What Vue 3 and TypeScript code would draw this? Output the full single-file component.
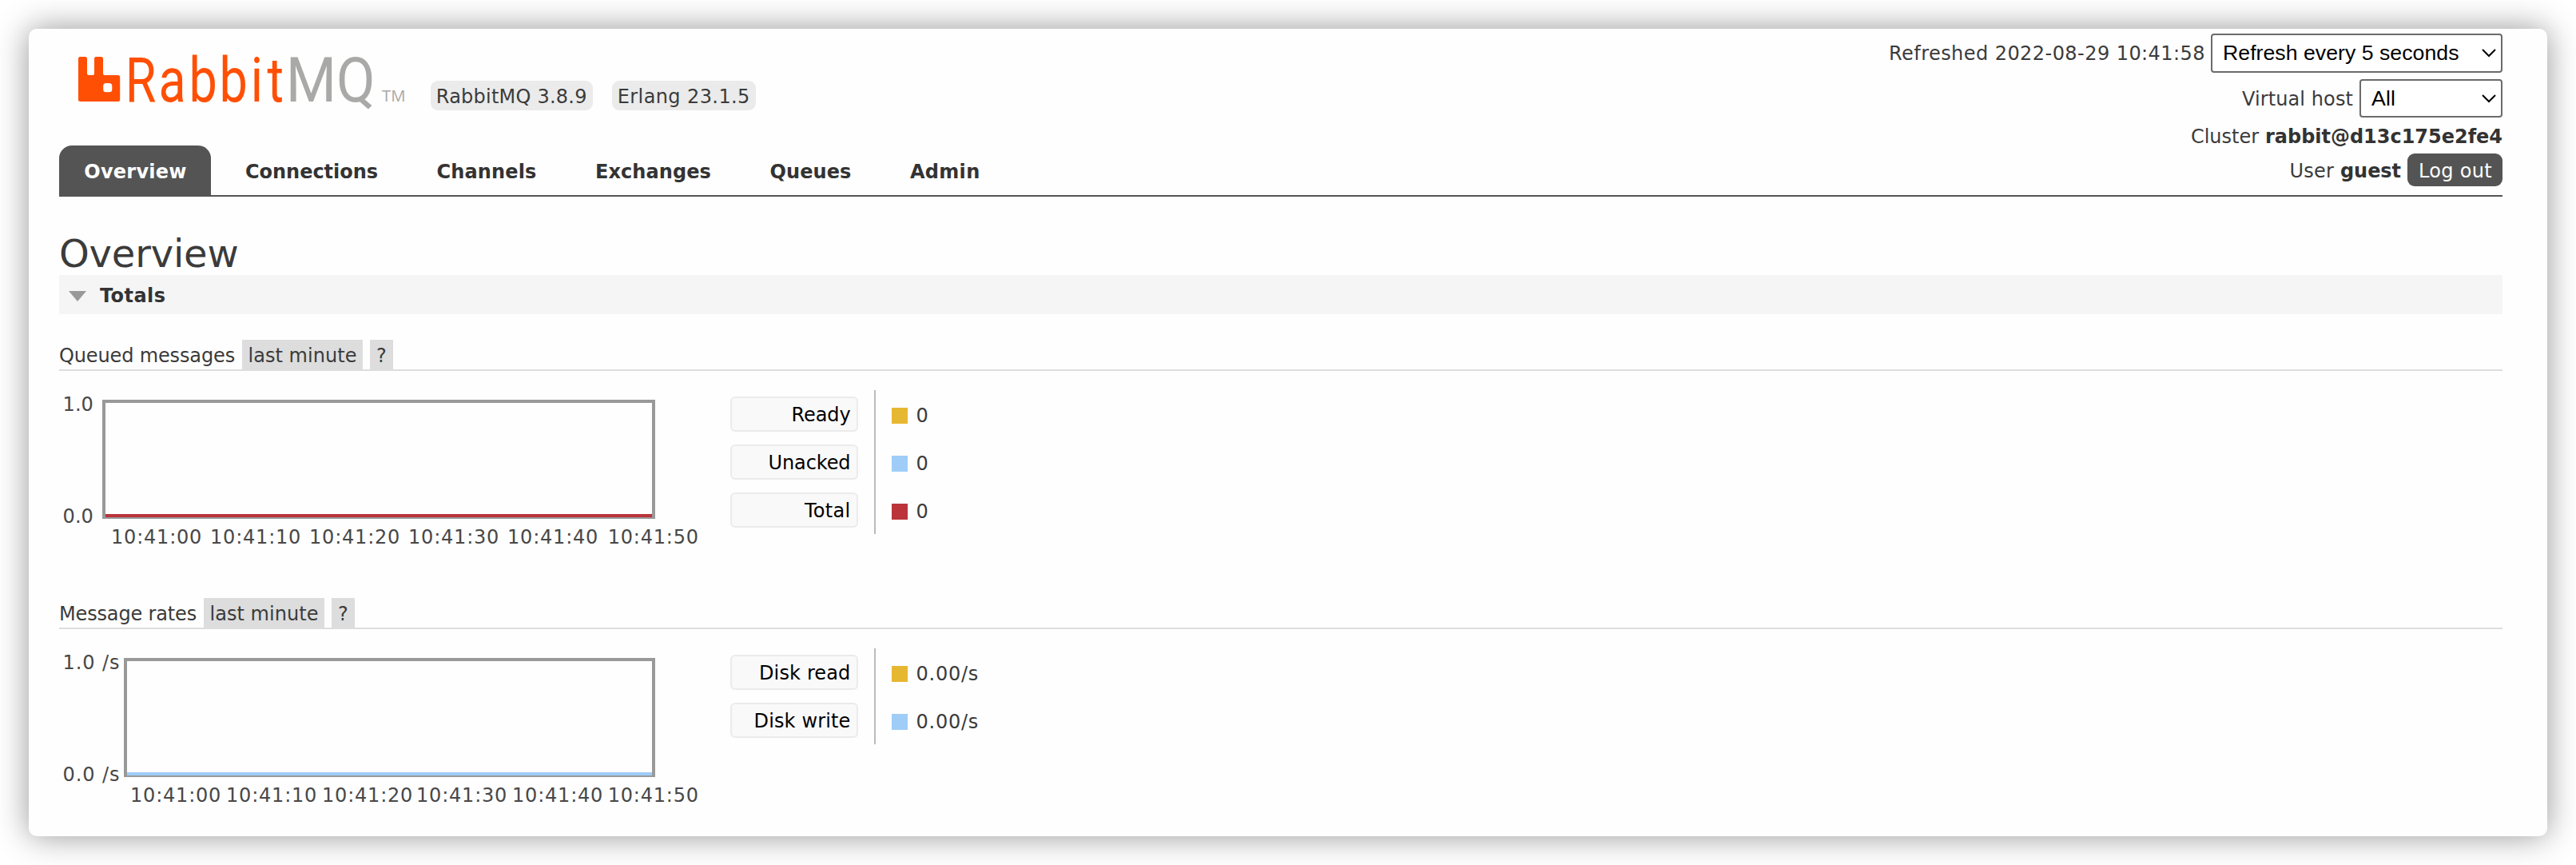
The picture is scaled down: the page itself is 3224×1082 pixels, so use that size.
<script setup lang="ts">
interface Tab { label: string; width: number }
interface Tick { label: string; x: number }
interface Series { label: string; width: number; value: string; valueWidth: number; color: string }
interface Panel {
  title: string
  titleWidth: number
  unit: string
  labelWidth: number
  frameX: number
  line: string
  ticks: Tick[]
  series: Series[]
}

// Spreads a label's letters evenly so that it takes up the given width in pixels.
const vFit = {
  mounted(el: HTMLElement, binding: { value: number }) {
    const count = (el.textContent ?? '').length
    if (!count) return
    const natural = el.getBoundingClientRect().width
    el.style.letterSpacing = `${((binding.value - natural) / count).toFixed(4)}px`
  },
}

const tabs: Tab[] = [
  { label: 'Overview', width: 128.5 },
  { label: 'Connections', width: 166 },
  { label: 'Channels', width: 125 },
  { label: 'Exchanges', width: 145 },
  { label: 'Queues', width: 102 },
  { label: 'Admin', width: 87.5 },
]

const yellow = '#e6b731'
const blue = '#9fcdf7'
const red = '#ba343a'

const makeTicks = (xs: number[]): Tick[] => xs.map((x, i) => ({ label: `10:41:${i}0`, x }))

const panels: Panel[] = [
  {
    title: 'Queued messages',
    titleWidth: 220,
    unit: '',
    labelWidth: 38.4,
    frameX: 54,
    line: red,
    ticks: makeTicks([65, 189, 313, 437, 561, 686.7]),
    series: [
      { label: 'Ready', width: 74, value: '0', valueWidth: 15.3, color: yellow },
      { label: 'Unacked', width: 103, value: '0', valueWidth: 15.3, color: blue },
      { label: 'Total', width: 57.5, value: '0', valueWidth: 15.3, color: red },
    ],
  },
  {
    title: 'Message rates',
    titleWidth: 172,
    unit: ' /s',
    labelWidth: 71,
    frameX: 81,
    line: blue,
    ticks: makeTicks([89, 209, 329, 447, 567, 686.7]),
    series: [
      { label: 'Disk read', width: 114.5, value: '0.00/s', valueWidth: 78.5, color: yellow },
      { label: 'Disk write', width: 121, value: '0.00/s', valueWidth: 78.5, color: blue },
    ],
  },
]
</script>

<template>
  <div class="window">
    <header class="header">
      <div class="left">
        <div class="brand">
          <svg class="logo" width="420" height="106" viewBox="0 -20 420 106">
            <path
              class="mark"
              fill-rule="evenodd"
              d="M2.500 5H8.500Q11 5 11 7.500V26Q11 28 13 28H18Q20 28 20 26V7.500Q20 5 22.500 5H28.500Q31 5 31 7.500V26Q31 28 33 28H50Q52.200 28 52.200 30.500V58.500Q52.200 61 50 61H2.500Q0 61 0 58.500V7.500Q0 5 2.500 5ZM35 38Q31.200 38 31.200 41.500V46Q31.200 49.300 35 49.300H38.500Q42.300 49.300 42.300 46V41.500Q42.300 38 38.500 38Z"
            />
            <text class="word orange" transform="translate(0 61) scale(0.8 1)" x="73.500 125.500 173 220.500 269.800 295.500">Rabbit</text>
            <text class="word grey" transform="translate(259.800 61) scale(0.925 1)">M</text>
            <text class="word grey" transform="translate(323 61) scale(0.9 1)">Q</text>
            <text class="tm" x="380" y="61" textLength="29.500" lengthAdjust="spacingAndGlyphs">TM</text>
          </svg>
          <span class="badge"><span v-fit="189">RabbitMQ 3.8.9</span></span>
          <span class="badge"><span v-fit="166">Erlang 23.1.5</span></span>
        </div>
        <nav class="tabs">
          <a v-for="(tab, i) in tabs" :key="tab.label" class="tab" :class="{ active: i === 0 }"><span v-fit="tab.width">{{ tab.label }}</span></a>
        </nav>
      </div>

      <div class="right">
        <div class="row refresh">
          <span v-fit="396">Refreshed 2022-08-29 10:41:58</span>
          <div class="select interval">
            <span v-fit="295.500">Refresh every 5 seconds</span>
            <svg width="18" height="12" viewBox="0 0 18 12"><path d="M1 1L9 9L17 1" /></svg>
          </div>
        </div>
        <div class="row vhost">
          <span v-fit="139">Virtual host</span>
          <div class="select host">
            <span v-fit="30">All</span>
            <svg width="18" height="12" viewBox="0 0 18 12"><path d="M1 1L9 9L17 1" /></svg>
          </div>
        </div>
        <div class="row cluster">
          <span v-fit="85">Cluster</span>
          <b v-fit="297">rabbit@d13c175e2fe4</b>
        </div>
        <div class="row user">
          <span v-fit="55.500">User</span>
          <b v-fit="76">guest</b>
          <span class="logout"><span v-fit="92">Log out</span></span>
        </div>
      </div>
    </header>

    <h1><span v-fit="224.500">Overview</span></h1>
    <h2>
      <svg width="22" height="13" viewBox="0 0 22 13"><path d="M0 0H22L11 13Z" /></svg>
      <span v-fit="82.500">Totals</span>
    </h2>

    <section v-for="panel in panels" :key="panel.title" class="panel">
      <div class="panel-head">
        <span class="title"><span v-fit="panel.titleWidth">{{ panel.title }}</span></span>
        <span class="chip range"><span v-fit="136">last minute</span></span>
        <span class="chip help">?</span>
      </div>
      <div class="panel-body">
        <svg class="chart" width="840" height="250" viewBox="0 0 840 250">
          <rect :x="panel.frameX + 2" y="38" :width="744 - panel.frameX - 2" height="145" class="frame" />
          <rect :x="panel.frameX + 4" y="179" :width="742 - panel.frameX - 4" height="4" :fill="panel.line" />
          <text x="4.500" y="50" :textLength="panel.labelWidth">1.0{{ panel.unit }}</text>
          <text x="4.500" y="190" :textLength="panel.labelWidth">0.0{{ panel.unit }}</text>
          <text v-for="tick in panel.ticks" :key="tick.label" :x="tick.x" y="216" textLength="113.400">{{ tick.label }}</text>
        </svg>
        <div class="labels">
          <div v-for="s in panel.series" :key="s.label" class="label"><span v-fit="s.width">{{ s.label }}</span></div>
        </div>
        <div class="values">
          <div v-for="s in panel.series" :key="s.label" class="value">
            <i class="swatch" :style="{ background: s.color }"></i>
            <span v-fit="s.valueWidth">{{ s.value }}</span>
          </div>
        </div>
      </div>
    </section>
  </div>
</template>

<style>
body {
  background: #fff;
  overflow: hidden;
}
</style>

<style scoped>
.window {
  box-sizing: border-box;
  width: 3152px;
  height: 1010px;
  margin: 36px;
  padding: 0 56px 0 38px;
  background: #fefefe;
  border-radius: 10px;
  box-shadow: 0 0 40px rgba(0, 0, 0, 0.42);
  color: #3b3b3b;
  font: 24px 'DejaVu Sans', Verdana, sans-serif;
  white-space: nowrap;
}
.header {
  display: flex;
  justify-content: space-between;
  height: 208px;
  border-bottom: 2px solid #545454;
}
.left {
  display: flex;
  flex-direction: column;
  justify-content: space-between;
}
.brand {
  display: flex;
  padding: 10px 0 0 24px;
}
.logo {
  margin-right: 21px;
}
.mark,
.orange {
  fill: #ff4f05;
}
.grey,
.tm {
  fill: #a9a9a7;
}
.word {
  font-family: Roboto, sans-serif;
  font-size: 78.5px;
}
.tm {
  font-family: 'Open Sans', sans-serif;
  font-size: 20px;
}
.badge {
  height: 37px;
  margin: 55px 24.5px 0 0;
  padding: 0 6.75px;
  border-radius: 9px;
  background: #ebebeb;
  line-height: 40px;
}
.tabs {
  display: flex;
  gap: 12.5px;
}
.tab {
  height: 62px;
  padding: 0 30.5px;
  border-radius: 16px 16px 0 0;
  color: #333;
  font-weight: bold;
  line-height: 66px;
}
.tab.active {
  padding: 0 30.25px 0 31.25px;
  background: #545454;
  color: #fff;
}
.right {
  display: flex;
  flex-direction: column;
  align-items: flex-end;
  padding-top: 6px;
}
.row {
  display: flex;
}
.refresh {
  gap: 7px;
  height: 49px;
  margin-bottom: 8px;
  line-height: 50px;
}
.vhost {
  gap: 8px;
  height: 48px;
  margin-bottom: 9px;
  line-height: 50px;
}
.cluster {
  gap: 8px;
  height: 30px;
  margin-bottom: 6px;
  line-height: 30px;
}
.user {
  gap: 8px;
  height: 41px;
  line-height: 44px;
}
.row b {
  color: #333;
}
.select {
  box-sizing: border-box;
  display: flex;
  justify-content: space-between;
  height: 100%;
  padding: 0 6px 0 13px;
  border: 2px solid #6b6b6b;
  border-radius: 4px;
  background: #fff;
  color: #000;
  font: 26.67px 'Liberation Sans', Arial, sans-serif;
  line-height: 44px;
}
.select svg {
  margin-top: 17px;
}
.select path {
  fill: none;
  stroke: #000;
  stroke-width: 2;
}
.interval {
  width: 365px;
}
.host {
  width: 179px;
}
.logout {
  padding: 0 13px 0 14px;
  border-radius: 9px;
  background: #545454;
  color: #fff;
}
h1 {
  height: 55px;
  margin: 43px 0 0;
  font-size: 48px;
  font-weight: normal;
  line-height: 56px;
}
h2 {
  display: flex;
  height: 49px;
  margin: 0 0 32px;
  padding-left: 12px;
  background: #f5f5f5;
  color: #333;
  font-size: 24px;
  line-height: 52px;
}
h2 svg {
  margin: 19.5px 17px 0 0;
  fill: #999;
}
.panel {
  height: 323px;
}
.panel-head {
  display: flex;
  gap: 9px;
  height: 37px;
  border-bottom: 2px solid #ddd;
  line-height: 40px;
}
.chip {
  box-sizing: border-box;
  height: 37px;
  padding: 0 7.5px;
  background: #ddd;
}
.help {
  width: 29px;
  padding: 0 8px;
}
.panel-body {
  display: flex;
  align-items: flex-start;
}
.chart text {
  fill: #484848;
}
.frame {
  fill: #fefefe;
  stroke: #999;
  stroke-width: 4;
}
.labels {
  width: 160px;
  margin: 24px 20px 0 0;
}
.label {
  box-sizing: border-box;
  height: 44px;
  margin: 8px 0 16px;
  padding-right: 7.5px;
  border: 2px solid #ebebeb;
  border-radius: 6px;
  background: #f9f9f9;
  color: #000;
  line-height: 42px;
  text-align: right;
}
.values {
  margin-top: 24px;
  padding-left: 20px;
  border-left: 2px solid #bbb;
}
.value {
  box-sizing: border-box;
  display: flex;
  align-items: center;
  gap: 10.5px;
  height: 60px;
  padding-top: 4px;
}
.swatch {
  width: 20px;
  height: 20px;
}
</style>
